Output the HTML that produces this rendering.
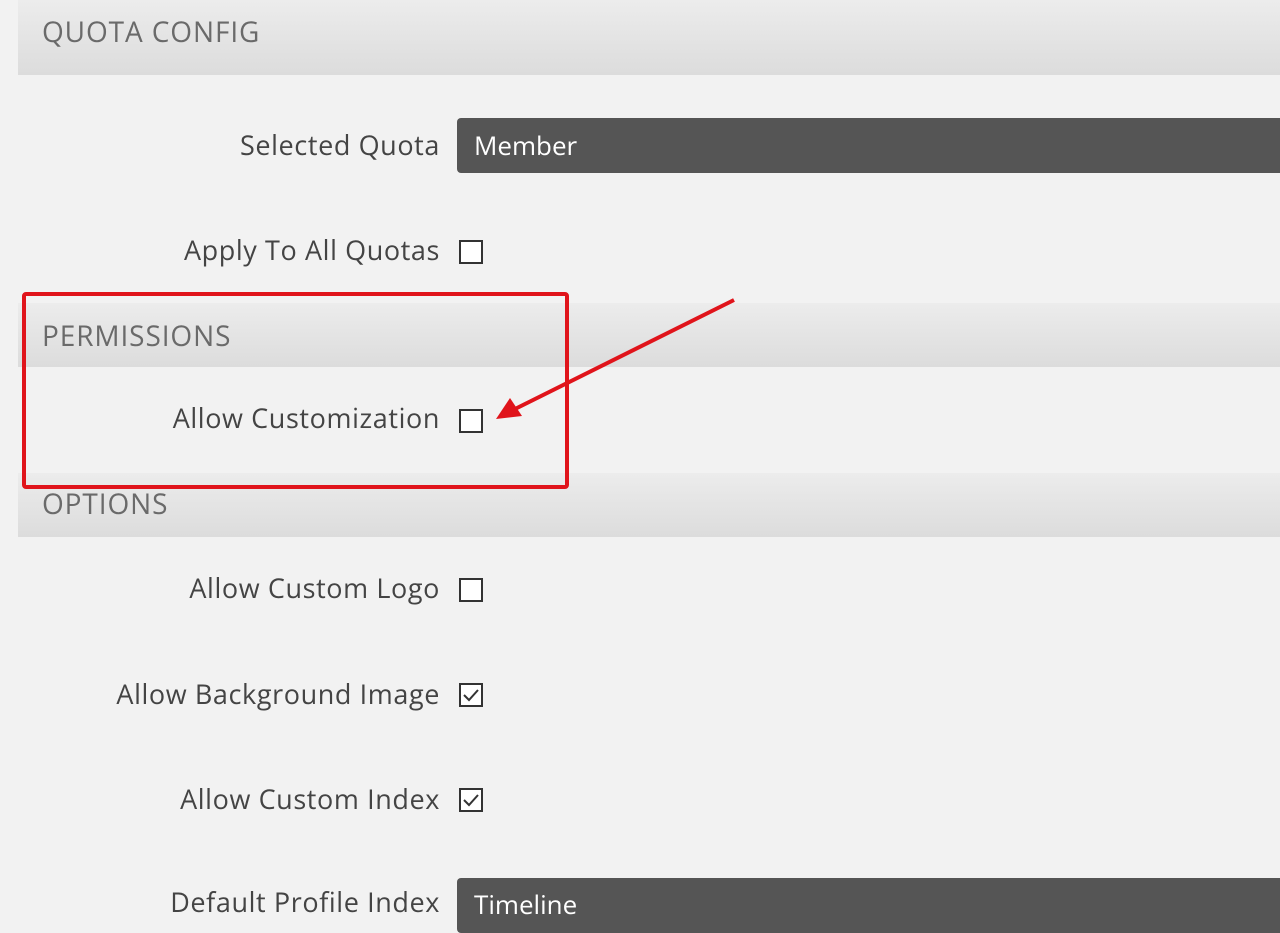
<!DOCTYPE html>
<html><head><style>
body{margin:0;width:1280px;height:915px;overflow:hidden;background:#f2f2f2;font-family:"Open Sans","Liberation Sans",sans-serif;position:relative}
.hd{position:absolute;left:18px;width:1262px;background:linear-gradient(#ececec,#dcdcdc);color:#6a6a6a;font-size:28px;letter-spacing:0.9px}
.hd span{position:absolute;left:24px}
.lb{position:absolute;right:840px;color:#444;font-size:27px;line-height:40px;white-space:nowrap;letter-spacing:0.6px}
.cb{position:absolute;left:459px;width:20px;height:20px;border:2px solid #333;background:#fff}
.sel{position:absolute;left:457px;width:830px;height:55px;background:#555;border-radius:4px;color:#fff;font-size:26px;line-height:55px;padding-left:17px;box-sizing:border-box}
</style></head><body>
<div class="hd" style="top:0;height:75px"><span style="top:13px">QUOTA CONFIG</span></div>
<div class="lb" style="top:125px">Selected Quota</div>
<div class="sel" style="top:118px">Member</div>
<div class="lb" style="top:230px">Apply To All Quotas</div>
<div class="cb" style="top:240px"></div>
<div class="hd" style="top:303px;height:64px"><span style="top:14px">PERMISSIONS</span></div>
<div class="lb" style="top:398px">Allow Customization</div>
<div class="cb" style="top:409px"></div>
<div class="hd" style="top:473px;height:64px"><span style="top:12px">OPTIONS</span></div>
<div class="lb" style="top:568px">Allow Custom Logo</div>
<div class="cb" style="top:578px"></div>
<div class="lb" style="top:674px">Allow Background Image</div>
<div class="cb" style="top:683px"></div>
<div class="lb" style="top:779px">Allow Custom Index</div>
<div class="cb" style="top:788px"></div>
<div class="lb" style="top:882px">Default Profile Index</div>
<div class="sel" style="top:878px;line-height:52px">Timeline</div>
<svg style="position:absolute;left:0;top:0" width="1280" height="915">
<path d="M464 695 l5 5 l9 -10" fill="none" stroke="#333" stroke-width="2"/>
<path d="M464 800 l5 5 l9 -10" fill="none" stroke="#333" stroke-width="2"/>
<rect x="24" y="294" width="543" height="193" fill="none" stroke="#e0141b" stroke-width="4" rx="2"/>
<line x1="734" y1="300" x2="515" y2="409" stroke="#e0141b" stroke-width="4"/>
<polygon points="496,419 510,398 522,416" fill="#e0141b"/>
</svg>
</body></html>
